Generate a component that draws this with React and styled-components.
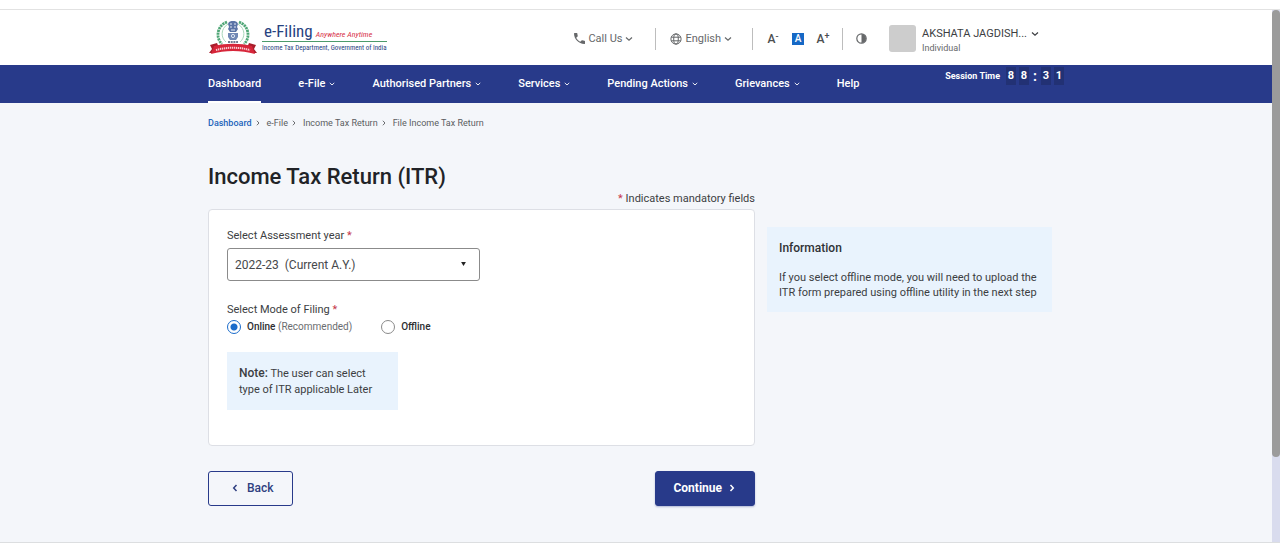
import React, { useState } from "react";
import styled, { createGlobalStyle } from "styled-components";

const GlobalStyle = createGlobalStyle`
  * { box-sizing: border-box; }
  html, body, #root { height: 100%; }
  body {
    margin: 0;
    background: #fff;
    color: #3c3e42;
    font-family: Roboto, "Liberation Sans", sans-serif;
    font-size: 11px;
    line-height: 16px;
  }
  button, select { font-family: inherit; }
  h1, h2, p, ol, ul, fieldset { margin: 0; padding: 0; border: 0; }
`;

const Window = styled.div`
  min-height: 100%;
  padding: 9px 0 1px;
  display: flex;
`;

const Frame = styled.div`
  flex: 1;
  display: grid;
  grid-template-columns: 1fr 8px;
  border-top: 1px solid #e2e2e2;
  border-bottom: 1px solid #dcdee0;
`;

const Page = styled.div`
  display: flex;
  flex-direction: column;
  min-width: 0;
  background: #f4f6fa;
`;

const ScrollTrack = styled.div`
  background: #d9dcee;
`;

const ScrollThumb = styled.div`
  height: 84%;
  border-radius: 4px;
  background: #9b9b9b;
`;

const Container = styled.div`
  width: 100%;
  max-width: 856px;
  margin: 0 auto;
`;

const Header = styled.header`
  background: #fff;
`;

const HeaderRow = styled(Container)`
  height: 55px;
  display: flex;
  align-items: center;
`;

const Brand = styled.a`
  display: flex;
  align-items: center;
  gap: 4px;
  text-decoration: none;
`;

const BrandText = styled.span`
  display: flex;
  flex-direction: column;
  font-family: "Roboto Condensed", "Liberation Sans", sans-serif;
  color: #27427f;
`;

const BrandTop = styled.span`
  display: flex;
  align-items: baseline;
  gap: 3px;
  padding: 0 2px;
  border-bottom: 1px solid #4d9b6b;
  font-size: 17px;
  line-height: 18px;
`;

const BrandSlogan = styled.span`
  font-size: 8px;
  font-style: italic;
  line-height: 12px;
  color: #d8334a;
`;

const BrandDept = styled.span`
  font-size: 7px;
  line-height: 12px;
`;

const Tools = styled.div`
  margin-left: auto;
  padding-top: 2px;
  display: flex;
  align-items: center;
`;

const ToolButton = styled.button`
  display: flex;
  align-items: center;
  gap: 3px;
  padding: 0;
  border: 0;
  background: none;
  color: #66686a;
  font-size: 11px;
  line-height: 16px;
`;

const Divider = styled.span`
  width: 1px;
  height: 22px;
  margin: 0 ${(p) => p.$after}px 0 ${(p) => p.$before}px;
  background: #bdbdbd;
`;

const SizeGroup = styled.div`
  display: flex;
  align-items: center;
  gap: 13px;
`;

const SizeButton = styled.button`
  display: flex;
  align-items: flex-start;
  justify-content: center;
  width: 12px;
  height: 12px;
  padding: 0;
  border: 0;
  background: ${(p) => (p.$active ? "#1668c5" : "none")};
  color: ${(p) => (p.$active ? "#fff" : "#4c4e50")};
  font-size: ${(p) => (p.$active ? 10 : 12)}px;
  font-weight: 500;
  line-height: 12px;

  sup { font-size: 9px; line-height: 6px; }
`;

const Account = styled.button`
  display: flex;
  align-items: center;
  gap: 6px;
  margin-left: 22px;
  margin-right: 25px;
  padding: 0;
  border: 0;
  background: none;
  color: #3c3e42;
  text-align: left;
`;

const Avatar = styled.span`
  width: 27px;
  height: 27px;
  border-radius: 3px;
  background: #cdcdcd;
`;

const AccountText = styled.span`
  display: flex;
  flex-direction: column;
  padding-top: 5px;
  font-size: 11px;
  line-height: 14px;

  small { font-size: 9px; color: #66686a; }
`;

const AccountName = styled.span`
  display: flex;
  align-items: center;
  gap: 4px;
`;

const NavBar = styled.nav`
  background: #283a8a;
`;

const NavRow = styled(Container)`
  height: 38px;
  display: flex;
  align-items: stretch;
  justify-content: space-between;
`;

const NavList = styled.ul`
  display: flex;
  gap: 37px;
  list-style: none;
`;

const NavLink = styled.a`
  height: 100%;
  display: flex;
  align-items: center;
  gap: 4px;
  border-top: 2px solid transparent;
  border-bottom: 2px solid ${(p) => (p.$active ? "#fff" : "transparent")};
  color: #fff;
  font-weight: 500;
  font-size: 11px;
  white-space: nowrap;
  text-decoration: none;
`;

const Session = styled.div`
  display: flex;
  align-items: center;
  gap: 3px;
  height: 18px;
  margin-top: 2px;
  color: #fff;
  font-size: 9px;
  font-weight: 700;
  white-space: nowrap;
`;

const SessionLabel = styled.span`
  margin-right: 3px;
`;

const Digit = styled.span`
  width: 10px;
  background: #223174;
  font-size: 11px;
  line-height: 18px;
  text-align: center;
`;

const Colon = styled.span`
  width: 6px;
  font-size: 14px;
  text-align: center;
`;

const Main = styled(Container).attrs({ as: "main" })`
  padding-bottom: 36px;
`;

const Crumbs = styled.ol`
  display: flex;
  margin-top: 12px;
  list-style: none;
  font-size: 9px;
  color: #5b5d61;
`;

const Crumb = styled.li`
  display: flex;
  align-items: center;
  gap: 3px;

  & + & { margin-left: 6px; }
  a {
    color: ${(p) => (p.$home ? "#2364ba" : "inherit")};
    font-weight: ${(p) => (p.$home ? 500 : 400)};
    text-decoration: none;
  }
`;

const Title = styled.h1`
  margin-top: 32px;
  color: #212327;
  font-size: 22px;
  font-weight: 500;
  line-height: 28px;
`;

const Columns = styled.div`
  display: grid;
  grid-template-columns: 547fr 285fr;
  gap: 12px;
  padding-right: 12px;
`;

const Mandatory = styled.p`
  text-align: right;
  line-height: 16px;
  margin-bottom: 2px;
`;

const Star = styled.span`
  color: #c5374a;
`;

const Card = styled.section`
  padding: 18px 18px 35px;
  border: 1px solid #dddfe5;
  border-radius: 4px;
  background: #fff;
`;

const FieldLabel = styled.label`
  display: block;
  margin-bottom: 4px;
`;

const SelectBox = styled.div`
  position: relative;
  width: 253px;
  max-width: 100%;

  svg {
    position: absolute;
    right: 14px;
    top: 14px;
    pointer-events: none;
  }
`;

const Select = styled.select`
  appearance: none;
  width: 100%;
  height: 33px;
  padding: 0 28px 0 7px;
  border: 1px solid #8b8b8b;
  border-radius: 3px;
  background: #fff;
  color: #46484b;
  font-size: 12px;
`;

const Modes = styled.fieldset`
  margin-top: 21px;
`;

const ModeRow = styled.div`
  display: flex;
  gap: 29px;
  margin-top: 1px;
`;

const Choice = styled.label`
  display: flex;
  align-items: center;
  gap: 6px;
  color: #6b6d70;
  font-size: 10px;

  b { font-weight: 500; color: #2c2e31; }
`;

const Radio = styled.input`
  appearance: none;
  width: 14px;
  height: 14px;
  margin: 0;
  border: 1px solid #8a8a8a;
  border-radius: 50%;
  background: #fff;

  &:checked {
    border-color: #1b6ccb;
    background: radial-gradient(circle, #1b6ccb 3px, #fff 4px);
  }
`;

const Note = styled.p`
  width: 171px;
  margin-top: 17px;
  padding: 14px 12px 12px;
  background: #e9f3fd;
  line-height: 16px;

  b { font-size: 12px; font-weight: 500; line-height: 14px; }
`;

const Info = styled.aside`
  align-self: start;
  margin-top: 36px;
  padding: 12px;
  background: #e9f3fd;

  h2 {
    margin-bottom: 13px;
    color: #303236;
    font-size: 12px;
    font-weight: 500;
    line-height: 18px;
  }
  p { line-height: 15px; }
`;

const Actions = styled.div`
  display: flex;
  justify-content: space-between;
  margin-top: 25px;
`;

const ActionButton = styled.button`
  height: 35px;
  display: flex;
  align-items: center;
  gap: ${(p) => (p.$primary ? 6 : 8)}px;
  padding: 0 18px 2px ${(p) => (p.$primary ? 17 : 22)}px;
  border: 1px solid #283a8a;
  border-radius: 3px;
  background: ${(p) => (p.$primary ? "#283a8a" : "transparent")};
  color: ${(p) => (p.$primary ? "#fff" : "#2f3f80")};
  font-size: 12px;
  font-weight: ${(p) => (p.$primary ? 700 : 500)};
  box-shadow: ${(p) => (p.$primary ? "0 1px 2px #28388a55" : "none")};
`;

const TURN = { down: 0, left: 90, right: -90 };

const Chevron = ({ size = 8, turn = "down", weight = 1.2 }) => (
  <svg width={size} height={size} viewBox="0 0 8 8" fill="none" stroke="currentColor" strokeWidth={weight} aria-hidden="true">
    <path d="M1 2.5 4 5.3 7 2.5" transform={`rotate(${TURN[turn]} 4 4)`} />
  </svg>
);

const Phone = () => (
  <svg width="11" height="11" viewBox="3 3 18 18" fill="currentColor" aria-hidden="true">
    <path d="M6.6 10.8c1.4 2.8 3.8 5.1 6.6 6.6l2.2-2.2c.3-.3.7-.4 1-.2 1.1.4 2.3.6 3.6.6.6 0 1 .4 1 1V20c0 .6-.4 1-1 1C10.6 21 3 13.4 3 4c0-.6.4-1 1-1h3.500c.6 0 1 .4 1 1 0 1.200.2 2.400.6 3.600.1.300 0 .700-.2 1z" />
  </svg>
);

const Globe = () => (
  <svg width="12" height="12" viewBox="0 0 12 12" fill="none" stroke="currentColor" strokeWidth="1" aria-hidden="true">
    <circle cx="6" cy="6" r="5.1" />
    <ellipse cx="6" cy="6" rx="2.3" ry="5.1" />
    <path d="M1.3 4.2h9.4M1.3 7.8h9.4" />
  </svg>
);

const Contrast = () => (
  <svg width="11" height="11" viewBox="0 0 11 11" aria-hidden="true">
    <circle cx="5.5" cy="5.5" r="4.7" fill="none" stroke="currentColor" strokeWidth="1.2" />
    <path d="M5.5 1a4.5 4.5 0 0 1 0 9z" fill="currentColor" />
  </svg>
);

const Emblem = () => (
  <svg width="50" height="36" viewBox="0 0 50 36" fill="none" aria-hidden="true">
    <path d="M19 2C8 6 8 19 14 24M31 2c11 4 11 17 5 22" stroke="#4fa676" strokeWidth="2.8" strokeDasharray="2.2 0.7" />
    <path d="M20 4c-8 5-7 14-2 18M30 4c8 5 7 14 2 18" stroke="#a9d6bb" strokeWidth="1" />
    <path d="M20 4c1-3 3-3 5-3s4 0 5 3l-1 3 1 2-2 3h-6l-2-3 1-2z" fill="#5b74a6" />
    <path d="M22 4h2m2 0h2M22 7h2m2 0h2M23 10h4" stroke="#e3e9f4" strokeWidth="1" />
    <path d="M20 13h10v4l-2 3h-6l-2-3z" fill="#7188b5" />
    <circle cx="25" cy="16" r="1.6" stroke="#e9eef7" strokeWidth="0.9" />
    <path d="M20 22h10" stroke="#46536e" strokeWidth="1.5" strokeDasharray="2 0.7" />
    <path d="M1 33 4 29 2 25l7-2 3 7-6 3zM49 33l-3-4 2-4-7-2-3 7 6 3z" fill="#a81d2b" />
    <path d="M6 26c12-3 26-3 38 0l3 8c-14-4-30-4-44 0z" fill="#d7263a" />
    <path d="M8 30c11-3 23-3 34 0" stroke="#f7cdd2" strokeWidth="2" strokeDasharray="1.3 0.7" />
  </svg>
);

const NAV = [
  { label: "Dashboard", active: true },
  { label: "e-File", menu: true },
  { label: "Authorised Partners", menu: true },
  { label: "Services", menu: true },
  { label: "Pending Actions", menu: true },
  { label: "Grievances", menu: true },
  { label: "Help" },
];

const CRUMBS = ["Dashboard", "e-File", "Income Tax Return", "File Income Tax Return"];

export default function App() {
  const [mode, setMode] = useState("online");

  return (
    <Window>
      <GlobalStyle />
      <Frame>
        <Page>
          <Header>
            <HeaderRow>
              <Brand href="#home">
                <Emblem />
                <BrandText>
                  <BrandTop>
                    e-Filing <BrandSlogan>Anywhere Anytime</BrandSlogan>
                  </BrandTop>
                  <BrandDept>Income Tax Department, Government of India</BrandDept>
                </BrandText>
              </Brand>
              <Tools>
                <ToolButton>
                  <Phone /> Call Us <Chevron />
                </ToolButton>
                <Divider $before={22} $after={14} />
                <ToolButton>
                  <Globe /> English <Chevron />
                </ToolButton>
                <Divider $before={20} $after={14} />
                <SizeGroup>
                  <SizeButton aria-label="Decrease text size">A<sup>-</sup></SizeButton>
                  <SizeButton $active aria-label="Normal text size">A</SizeButton>
                  <SizeButton aria-label="Increase text size">A<sup>+</sup></SizeButton>
                </SizeGroup>
                <Divider $before={13} $after={13} />
                <ToolButton aria-label="Contrast">
                  <Contrast />
                </ToolButton>
                <Account>
                  <Avatar />
                  <AccountText>
                    <AccountName>
                      AKSHATA JAGDISH... <Chevron />
                    </AccountName>
                    <small>Individual</small>
                  </AccountText>
                </Account>
              </Tools>
            </HeaderRow>
          </Header>

          <NavBar>
            <NavRow>
              <NavList>
                {NAV.map((item) => (
                  <li key={item.label}>
                    <NavLink href="#nav" $active={item.active}>
                      {item.label}
                      {item.menu && <Chevron size={6} />}
                    </NavLink>
                  </li>
                ))}
              </NavList>
              <Session>
                <SessionLabel>Session Time</SessionLabel>
                <Digit>8</Digit>
                <Digit>8</Digit>
                <Colon>:</Colon>
                <Digit>3</Digit>
                <Digit>1</Digit>
              </Session>
            </NavRow>
          </NavBar>

          <Main>
            <Crumbs>
              {CRUMBS.map((name, i) => (
                <Crumb key={name} $home={i === 0}>
                  <a href="#crumb">{name}</a>
                  {i < CRUMBS.length - 1 && <Chevron size={6} turn="right" />}
                </Crumb>
              ))}
            </Crumbs>
            <Title>Income Tax Return (ITR)</Title>
            <Columns>
              <div>
                <Mandatory>
                  <Star>*</Star> Indicates mandatory fields
                </Mandatory>
                <Card>
                  <FieldLabel htmlFor="year">
                    Select Assessment year <Star>*</Star>
                  </FieldLabel>
                  <SelectBox>
                    <Select id="year" defaultValue="2022">
                      <option value="2022">2022-23{"\u00a0 "}(Current A.Y.)</option>
                    </Select>
                    <svg width="5" height="4" viewBox="0 0 6 5" aria-hidden="true">
                      <path d="M0 0h6L3 5z" fill="#222" />
                    </svg>
                  </SelectBox>
                  <Modes aria-labelledby="mode-label">
                    <div id="mode-label">
                      Select Mode of Filing <Star>*</Star>
                    </div>
                    <ModeRow>
                      <Choice>
                        <Radio type="radio" name="mode" checked={mode === "online"} onChange={() => setMode("online")} />
                        <span><b>Online</b> (Recommended)</span>
                      </Choice>
                      <Choice>
                        <Radio type="radio" name="mode" checked={mode === "offline"} onChange={() => setMode("offline")} />
                        <b>Offline</b>
                      </Choice>
                    </ModeRow>
                  </Modes>
                  <Note>
                    <b>Note:</b> The user can select type of ITR applicable Later
                  </Note>
                </Card>
                <Actions>
                  <ActionButton>
                    <Chevron turn="left" weight={1.5} /> Back
                  </ActionButton>
                  <ActionButton $primary>
                    Continue <Chevron turn="right" weight={1.5} />
                  </ActionButton>
                </Actions>
              </div>
              <Info>
                <h2>Information</h2>
                <p>If you select offline mode, you will need to upload the ITR form prepared using offline utility in the next step</p>
              </Info>
            </Columns>
          </Main>
        </Page>
        <ScrollTrack>
          <ScrollThumb />
        </ScrollTrack>
      </Frame>
    </Window>
  );
}
